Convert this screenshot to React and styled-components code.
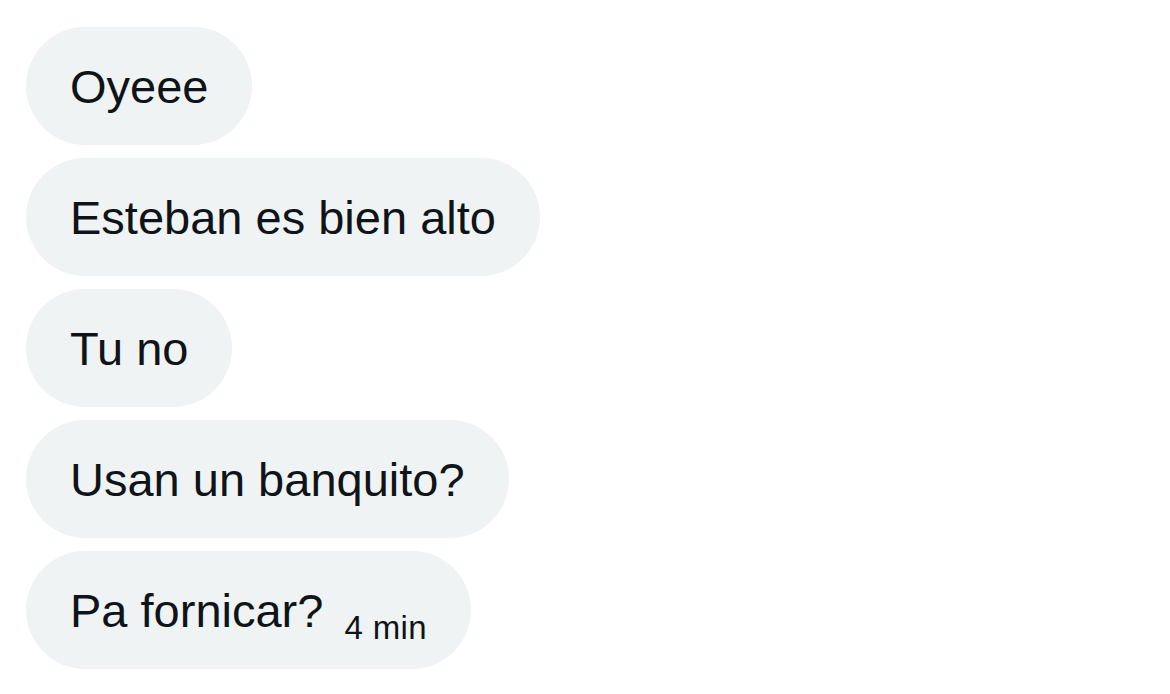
import styled, { createGlobalStyle } from "styled-components";

const GlobalStyle = createGlobalStyle`
  html, body {
    margin: 0;
    background: #ffffff;
  }
  body {
    font-family: "Liberation Sans", Arial, sans-serif;
    color: #0f1419;
  }
`;

const Thread = styled.div`
  display: flex;
  flex-direction: column;
  align-items: flex-start;
  gap: 13px;
  padding: 27px 0 0 26px;
`;

const Bubble = styled.div`
  display: flex;
  align-items: center;
  gap: 21px;
  height: 118px;
  box-sizing: border-box;
  padding: 0 44px 0 44px;
  border-radius: 59px;
  background: #eff3f4;
`;

const Text = styled.span`
  font-size: 47px;
  line-height: 1;
  white-space: nowrap;
`;

const Meta = styled.span`
  margin-top: 35px;
  font-size: 33px;
  line-height: 1;
  letter-spacing: 0.4px;
  white-space: nowrap;
`;

const messages = [
  { text: "Oyeee" },
  { text: "Esteban es bien alto" },
  { text: "Tu no" },
  { text: "Usan un banquito?" },
  { text: "Pa fornicar?", time: "4 min" },
];

const App = () => {
  return (
    <>
      <GlobalStyle />
      <Thread>
        {messages.map((m, i) => (
          <Bubble key={i}>
            <Text>{m.text}</Text>
            {m.time && <Meta>{m.time}</Meta>}
          </Bubble>
        ))}
      </Thread>
    </>
  );
};

export default App;
